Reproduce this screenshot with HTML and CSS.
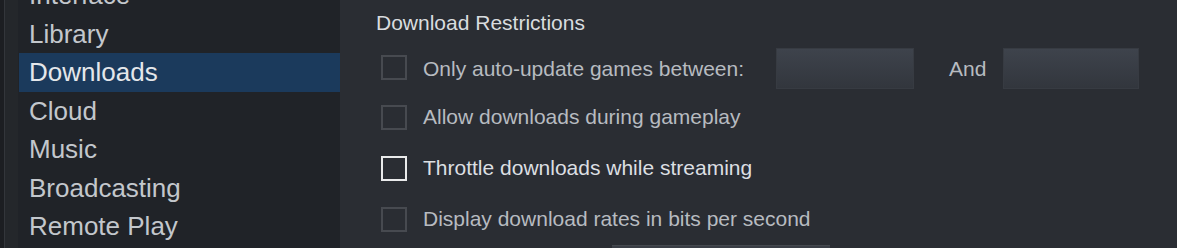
FILE: index.html
```html
<!DOCTYPE html>
<html lang="en">
<head>
<meta charset="utf-8">
<title>Settings - Downloads</title>
<link rel="stylesheet" href="styles.css">
</head>
<body>
<div class="app">
  <div class="rail"><div class="rail-line"></div></div>
  <nav class="sidebar">
    <div class="nav-item first">Interface</div>
    <div class="nav-item">Library</div>
    <div class="nav-item active">Downloads</div>
    <div class="nav-item">Cloud</div>
    <div class="nav-item">Music</div>
    <div class="nav-item">Broadcasting</div>
    <div class="nav-item">Remote Play</div>
  </nav>
  <main class="content">
    <div class="section-title">Download Restrictions</div>
    <div class="row row-times">
      <span class="checkbox shift"></span>
      <span class="label">Only auto-update games between:</span>
      <span class="time-box first-box"></span>
      <span class="and">And</span>
      <span class="time-box second-box"></span>
    </div>
    <div class="row">
      <span class="checkbox"></span>
      <span class="label">Allow downloads during gameplay</span>
    </div>
    <div class="row">
      <span class="checkbox focused"></span>
      <span class="label bright">Throttle downloads while streaming</span>
    </div>
    <div class="row">
      <span class="checkbox"></span>
      <span class="label">Display download rates in bits per second</span>
    </div>
    <div class="next-row"><span class="dropdown"></span></div>
  </main>
</div>
</body>
</html>
```

FILE: styles.css
```css
* { box-sizing: border-box; }
html, body {
  margin: 0;
  padding: 0;
  width: 1177px;
  height: 248px;
  overflow: hidden;
  background: #2a2d33;
  font-family: "Liberation Sans", Arial, sans-serif;
}
.app {
  display: flex;
  height: 248px;
  overflow: hidden;
}
.rail {
  width: 18px;
  flex: none;
  background: #24272b;
  display: flex;
}
.rail-line {
  width: 5px;
  background: #1c1e22;
  border-right: 1px solid #33363b;
}
.sidebar {
  width: 322px;
  flex: none;
  background: #202328;
  padding-left: 1px;
}
.nav-item {
  height: 38.5px;
  line-height: 38.5px;
  font-size: 26px;
  color: #c3c7cc;
  padding-left: 10px;
  white-space: nowrap;
}
.nav-item.first { margin-top: -24px; }
.nav-item.active {
  background: #1b3a5c;
  color: #e4e7ea;
}
.content {
  flex: 1;
  padding: 11px 0 0 36px;
  background: #2a2d33;
}
.section-title {
  font-size: 21px;
  color: #d9dcdf;
  margin-bottom: 13px;
}
.row {
  display: flex;
  align-items: center;
  height: 26px;
  margin-bottom: 25px;
  padding-left: 5px;
}
.row-times {
  height: 41px;
  margin-bottom: 15px;
}
.checkbox {
  width: 26px;
  height: 25px;
  flex: none;
  border: 2px solid #474a50;
  background: #2a2d33;
}
.checkbox.shift { margin-bottom: 3px; }
.checkbox.focused { border-color: #e9eaeb; }
.label {
  margin-left: 16px;
  font-size: 21px;
  color: #b7bbc0;
  white-space: nowrap;
}
.label.bright { color: #dcdfe2; }
.time-box {
  width: 138px;
  height: 41px;
  background: linear-gradient(#3e434c, #32363d);
  border: 1px solid #373b42;
}
.first-box { margin-left: 32px; }
.second-box { width: 136px; }
.and {
  font-size: 21px;
  color: #b7bbc0;
  margin: 0 17px 0 35px;
}
.next-row {
  margin-top: -12px;
  padding-left: 236px;
}
.dropdown {
  display: block;
  width: 218px;
  height: 20px;
  background: #3a3e46;
  border-top: 1px solid #45494f;
}
```
